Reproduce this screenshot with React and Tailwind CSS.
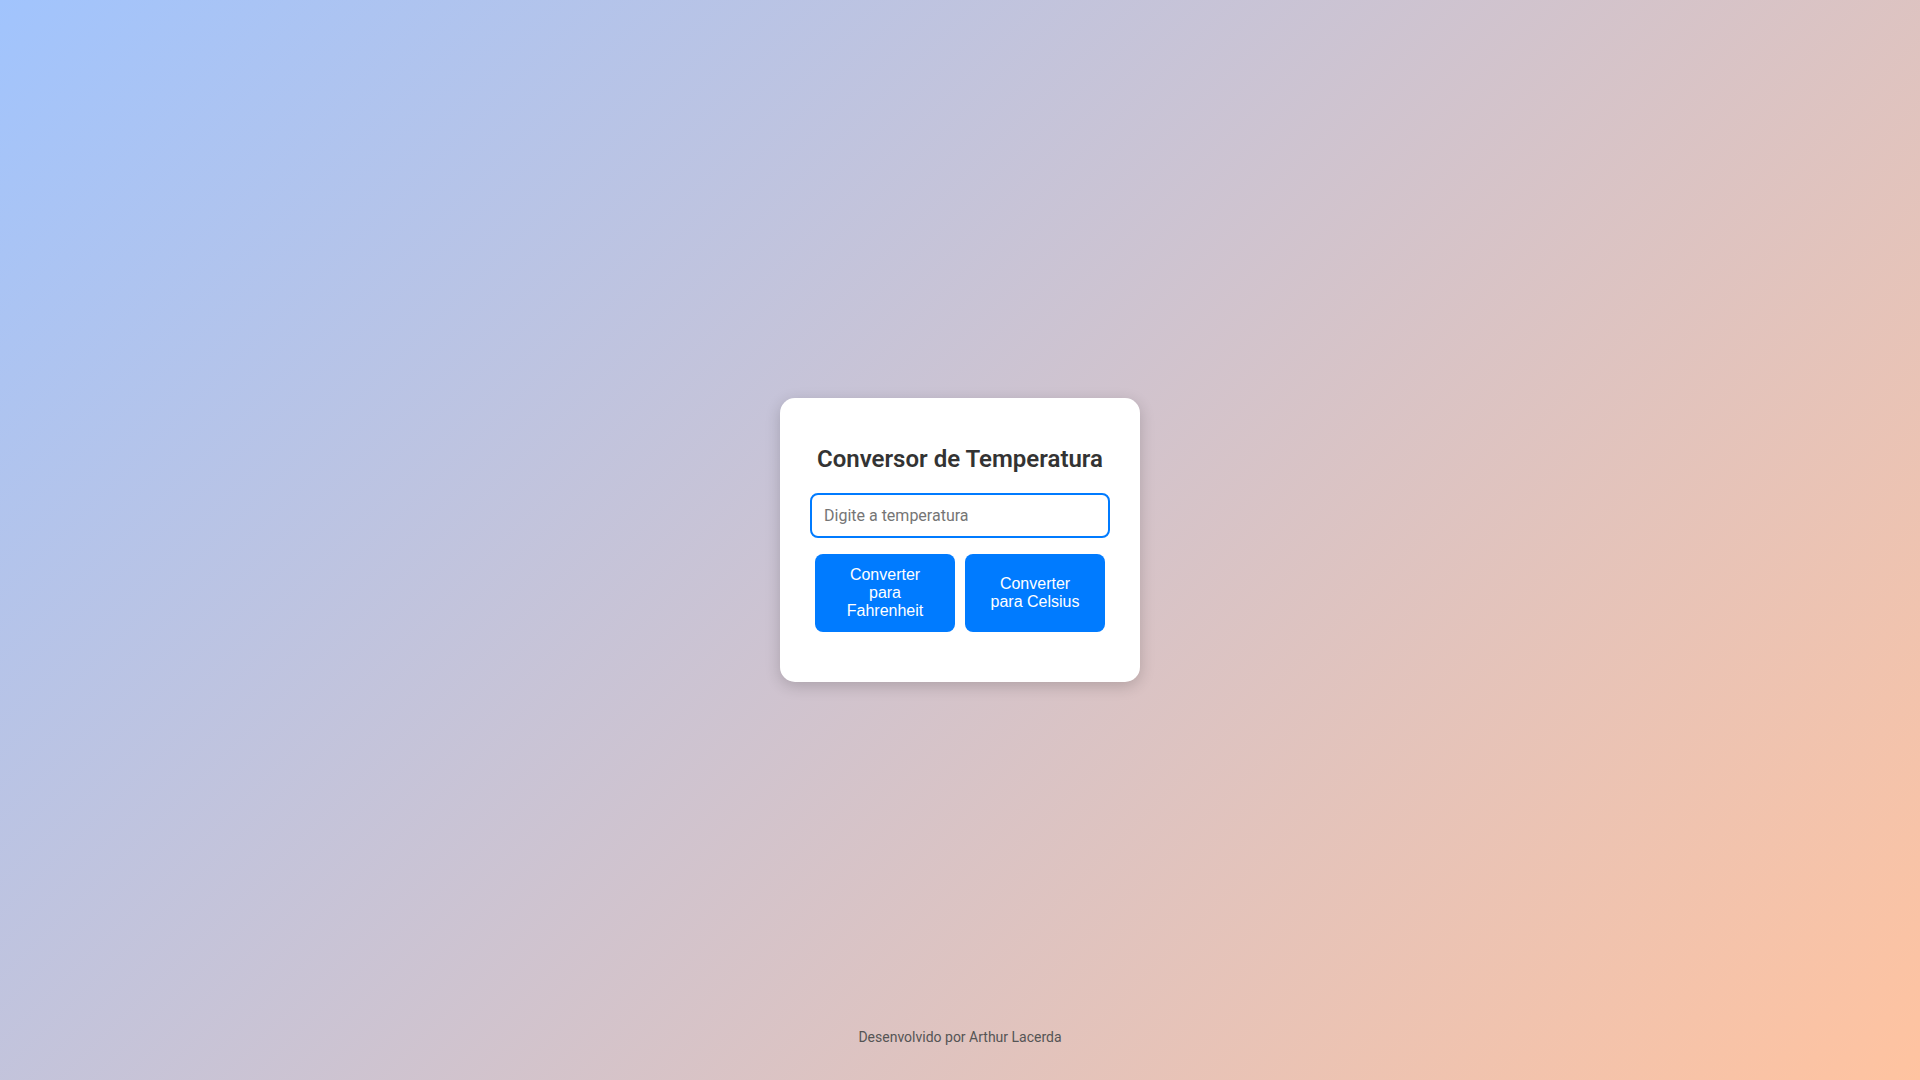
import React from "react";

export default function App() {
  return (
    <div className="h-screen w-full grid grid-rows-[minmax(0,1fr)_auto_minmax(0,1fr)] bg-[linear-gradient(135deg,#a1c4fd_0%,#ffc3a0_100%)] font-['Roboto',sans-serif]">
      <div />
      <div className="flex justify-center">
        <div className="w-[360px] bg-white rounded-[15px] px-[30px] pt-[30px] pb-[50px] shadow-[0_4px_15px_rgba(0,0,0,0.18)] flex flex-col">
          <h2 className="mt-[17px] mb-[20px] text-center text-[24px] leading-[28px] font-semibold text-[#333]">
            Conversor de Temperatura
          </h2>
          <input
            type="text"
            placeholder="Digite a temperatura"
            className="w-[300px] h-[45px] border-2 border-[#007bff] rounded-[8px] px-[12px] text-[16px] text-[#333] placeholder:text-[#757575] outline-none font-['Roboto',sans-serif]"
          />
          <div className="mt-[16px] flex gap-[10px] px-[5px]">
            <button className="w-[140px] bg-[#007bff] text-white rounded-[8px] px-[20px] py-[12px] text-[16px] leading-[18px] font-['Liberation_Sans',Arial,sans-serif]">
              Converter para Fahrenheit
            </button>
            <button className="w-[140px] bg-[#007bff] text-white rounded-[8px] px-[20px] py-[12px] text-[16px] leading-[18px] font-['Liberation_Sans',Arial,sans-serif]">
              Converter para Celsius
            </button>
          </div>
        </div>
      </div>
      <div className="flex flex-col justify-end items-center pb-[35px]">
        <p className="text-[14px] leading-[16px] text-[#555]">Desenvolvido por Arthur Lacerda</p>
      </div>
    </div>
  );
}
